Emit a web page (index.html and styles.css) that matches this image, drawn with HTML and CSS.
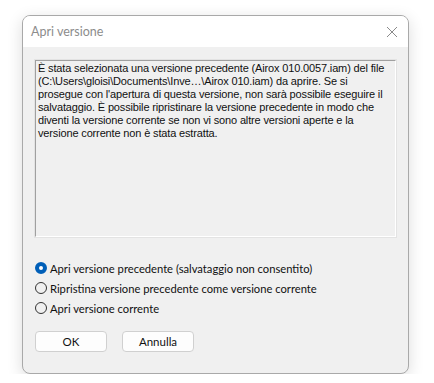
FILE: index.html
```html
<!DOCTYPE html>
<html lang="it">
<head>
    <meta charset="UTF-8">
    <title>Apri versione</title>
    <link rel="stylesheet" href="styles.css">
</head>
<body>
    <div class="dialog">
        <div class="titlebar">
            <span class="title">Apri versione</span>
            <svg class="close" width="12" height="12" viewBox="0 0 12 12"><path d="M1 1 L11 11 M11 1 L1 11" stroke="#8a8a8a" stroke-width="1" fill="none"/></svg>
        </div>
        <div class="content">
            <div class="message">È stata selezionata una versione precedente (Airox 010.0057.iam) del file (C:\Users\gloisi\Documents\Inve…\Airox 010.iam) da aprire. Se si prosegue con l'apertura di questa versione, non sarà possibile eseguire il salvataggio. È possibile ripristinare la versione precedente in modo che diventi la versione corrente se non vi sono altre versioni aperte e la versione corrente non è stata estratta.</div>
            <div class="options">
                <label class="option"><span class="radio checked"></span>Apri versione precedente (salvataggio non consentito)</label>
                <label class="option"><span class="radio"></span>Ripristina versione precedente come versione corrente</label>
                <label class="option"><span class="radio"></span>Apri versione corrente</label>
            </div>
            <div class="buttons">
                <button class="btn">OK</button>
                <button class="btn">Annulla</button>
            </div>
        </div>
    </div>
</body>
</html>
```

FILE: styles.css
```css
body { margin: 0; background: #fff; font-family: "Lato", "Open Sans", sans-serif; }
.dialog { margin: 15px 0 0 22px; width: 387px; height: 359px; background: #f0f0f0; border: 1px solid #a9a9a9; border-radius: 8px; box-shadow: 0 4px 16px rgba(0,0,0,0.14); overflow: hidden; box-sizing: border-box; }
.titlebar { height: 31px; background: #fff; display: flex; align-items: center; justify-content: space-between; padding: 0 10px 0 8px; }
.title { font-size: 12.5px; color: #8c8c8c; }
.close { margin-top: 1px; }
.content { padding: 13px 12px 0 12px; }
.message { height: 177px; box-sizing: border-box; border-top: 1px solid #a0a0a0; border-left: 1px solid #a0a0a0; border-bottom: 1px solid #fff; border-right: 1px solid #fff; outline: 1px solid #e3e3e3; padding: 1px 2px 0 2px; font-family: "Liberation Sans", Arial, sans-serif; font-size: 11px; letter-spacing: -0.15px; line-height: 13px; color: #111; }
.options { margin-top: 24px; display: flex; flex-direction: column; gap: 6px; }
.option { display: flex; align-items: center; font-size: 11.2px; color: #111; height: 14px; }
.radio { width: 12px; height: 12px; border: 1px solid #333; border-radius: 50%; margin-right: 3px; box-sizing: border-box; }
.radio.checked { border: 4px solid #005fb8; background: #fff; }
.buttons { margin-top: 16px; display: flex; gap: 15px; }
.btn { width: 72px; height: 21px; background: #fdfdfd; border: 1px solid #d0d0d0; border-radius: 4px; font-family: "Lato", sans-serif; font-size: 11.5px; color: #111; padding: 0; }
```
